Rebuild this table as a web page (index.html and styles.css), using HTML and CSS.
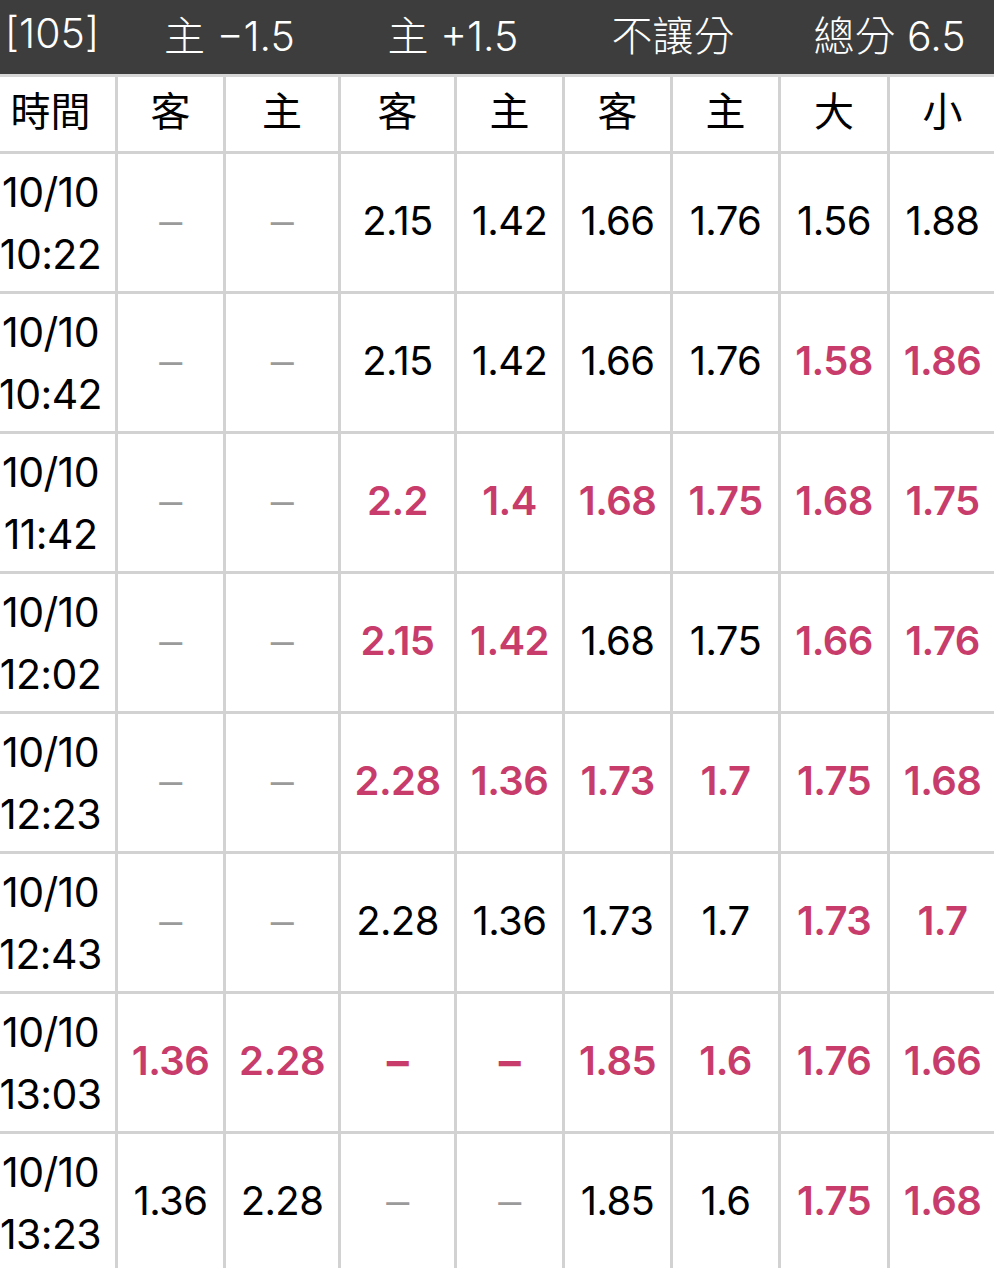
FILE: index.html
```html
<!DOCTYPE html>
<html lang="zh-Hant">
<head>
<meta charset="utf-8">
<title>賠率變化</title>
<link rel="stylesheet" href="styles.css">
</head>
<body>
<div class="scroller">
  <div class="odds">
    <div class="h1 c1">[105]</div>
    <div class="h1 span2">主 −1.5</div>
    <div class="h1 span2">主 +1.5</div>
    <div class="h1 span2">不讓分</div>
    <div class="h1 span2">總分 6.5</div>

    <div class="h2">時間</div>
    <div class="h2">客</div>
    <div class="h2">主</div>
    <div class="h2">客</div>
    <div class="h2">主</div>
    <div class="h2">客</div>
    <div class="h2">主</div>
    <div class="h2">大</div>
    <div class="h2">小</div>

    <div class="cell time">10/10<br>10:22</div>
    <div class="cell dash">–</div><div class="cell dash">–</div>
    <div class="cell">2.15</div><div class="cell">1.42</div>
    <div class="cell">1.66</div><div class="cell">1.76</div>
    <div class="cell">1.56</div><div class="cell">1.88</div>

    <div class="cell time">10/10<br>10:42</div>
    <div class="cell dash">–</div><div class="cell dash">–</div>
    <div class="cell">2.15</div><div class="cell">1.42</div>
    <div class="cell">1.66</div><div class="cell">1.76</div>
    <div class="cell up">1.58</div><div class="cell up">1.86</div>

    <div class="cell time">10/10<br>11:42</div>
    <div class="cell dash">–</div><div class="cell dash">–</div>
    <div class="cell up">2.2</div><div class="cell up">1.4</div>
    <div class="cell up">1.68</div><div class="cell up">1.75</div>
    <div class="cell up">1.68</div><div class="cell up">1.75</div>

    <div class="cell time">10/10<br>12:02</div>
    <div class="cell dash">–</div><div class="cell dash">–</div>
    <div class="cell up">2.15</div><div class="cell up">1.42</div>
    <div class="cell">1.68</div><div class="cell">1.75</div>
    <div class="cell up">1.66</div><div class="cell up">1.76</div>

    <div class="cell time">10/10<br>12:23</div>
    <div class="cell dash">–</div><div class="cell dash">–</div>
    <div class="cell up">2.28</div><div class="cell up">1.36</div>
    <div class="cell up">1.73</div><div class="cell up">1.7</div>
    <div class="cell up">1.75</div><div class="cell up">1.68</div>

    <div class="cell time">10/10<br>12:43</div>
    <div class="cell dash">–</div><div class="cell dash">–</div>
    <div class="cell">2.28</div><div class="cell">1.36</div>
    <div class="cell">1.73</div><div class="cell">1.7</div>
    <div class="cell up">1.73</div><div class="cell up">1.7</div>

    <div class="cell time">10/10<br>13:03</div>
    <div class="cell up">1.36</div><div class="cell up">2.28</div>
    <div class="cell dash up">–</div><div class="cell dash up">–</div>
    <div class="cell up">1.85</div><div class="cell up">1.6</div>
    <div class="cell up">1.76</div><div class="cell up">1.66</div>

    <div class="cell time">10/10<br>13:23</div>
    <div class="cell">1.36</div><div class="cell">2.28</div>
    <div class="cell dash">–</div><div class="cell dash">–</div>
    <div class="cell">1.85</div><div class="cell">1.6</div>
    <div class="cell up">1.75</div><div class="cell up">1.68</div>
  </div>
</div>
</body>
</html>
```
FILE: styles.css
```css
html, body {
  margin: 0;
  padding: 0;
  background: #ffffff;
  overflow: hidden;
}

body {
  font-family: Inter, "Noto Sans CJK TC", "Noto Sans", sans-serif;
  color: #000;
}

.scroller {
  width: 994px;
  height: 1268px;
  overflow: hidden;
}

.odds {
  margin-left: -14px;
  display: grid;
  grid-template-columns: 132px 108px 115px 116px 108px 108px 108px 109px 108px;
  grid-auto-rows: 140px;
  grid-template-rows: 77px 77px;
  width: max-content;
}

.h1 {
  box-sizing: border-box;
  background: #3d3d3d;
  color: #fff;
  font-weight: 300;
  font-size: 41px;
  border-bottom: 3px solid #d6d6d6;
  display: flex;
  align-items: center;
  justify-content: center;
  padding-bottom: 8px;
  white-space: nowrap;
}

.span2 {
  grid-column: span 2;
}

.h2,
.cell {
  box-sizing: border-box;
  border-right: 3px solid #d2d2d2;
  border-bottom: 3px solid #d2d2d2;
  display: flex;
  align-items: center;
  justify-content: center;
  text-align: center;
  white-space: nowrap;
}

.h2 {
  font-size: 40px;
  font-weight: 400;
  padding-bottom: 10px;
}

.cell {
  font-size: 40px;
  letter-spacing: -0.6px;
  padding-bottom: 4px;
}

.time {
  font-size: 41px;
  line-height: 62px;
  padding-bottom: 0;
}

.dash {
  color: #9a9a9a;
  font-weight: 300;
  font-size: 46px;
}

.up {
  color: #c83c6b;
  font-weight: 600;
}

.dash.up {
  color: #c83c6b;
  font-weight: 700;
  font-size: 44px;
}
```
